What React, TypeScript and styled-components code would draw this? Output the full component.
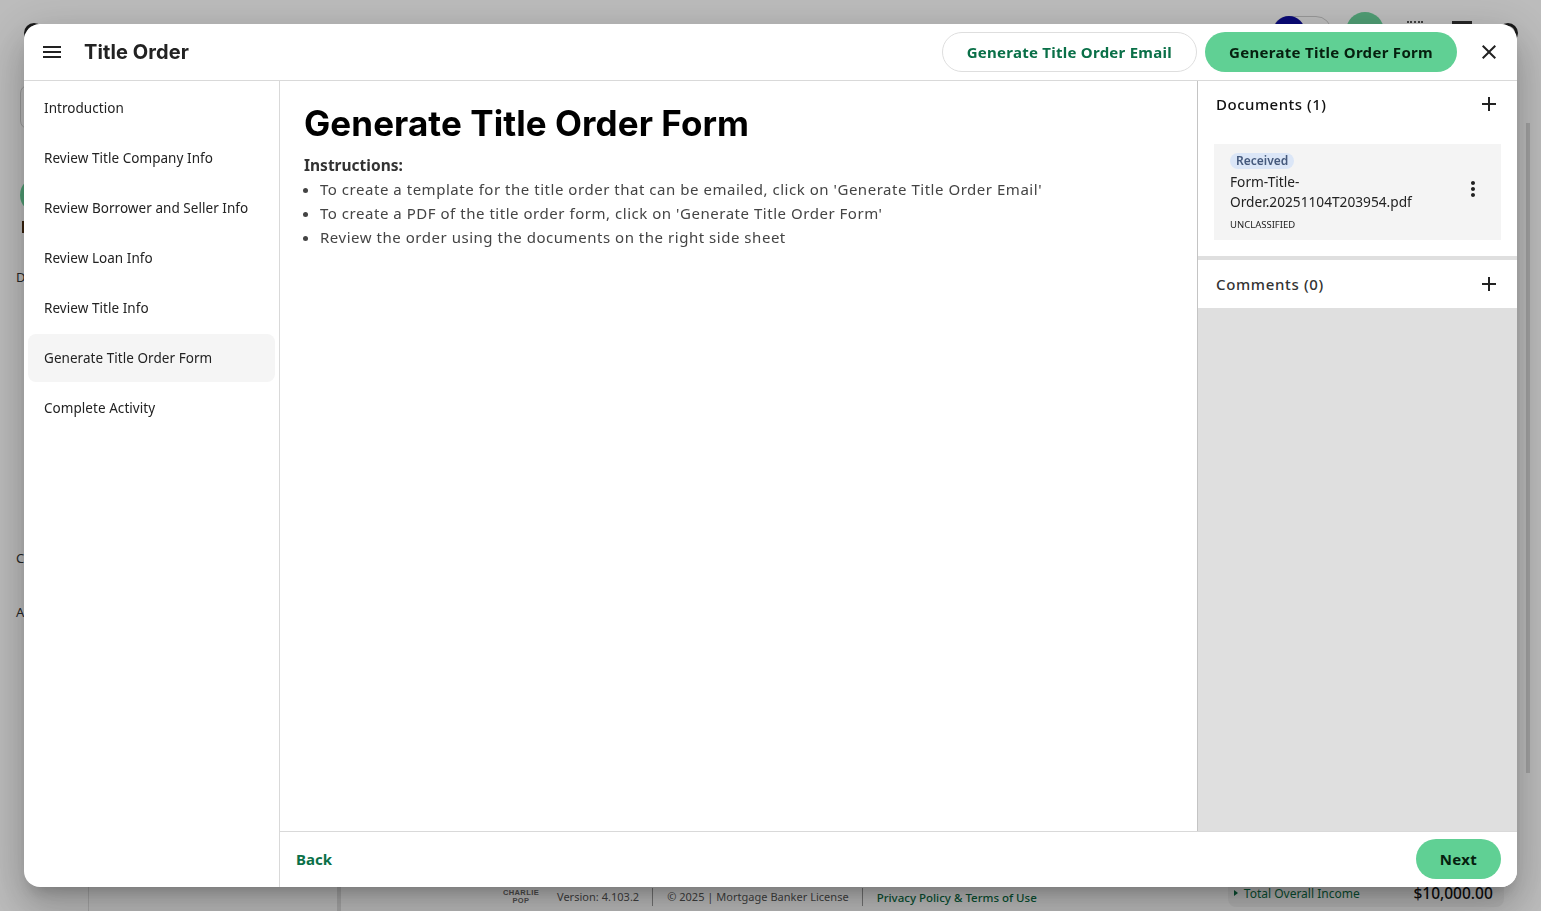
import React from "react";
import styled, { createGlobalStyle } from "styled-components";

const Global = createGlobalStyle`
  html, body { margin: 0; height: 100%; overflow: hidden; background: #f8f8f8; }
  body { font-family: "Noto Sans", "Liberation Sans", sans-serif; }
  * { box-sizing: border-box; }
`;

const Page = styled.div`
  width: 1541px;
  height: 911px;
  display: grid;
  grid-template-rows: 65px 1fr;
  background: #fbfbfb;
  color: #222;
`;
const TopBar = styled.div`
  display: flex;
  justify-content: flex-end;
  align-items: flex-start;
  padding: 12px 23px 0 24px;
`;
const CornerArc = styled.div`
  width: 20px;
  height: 20px;
  margin: 11px 0 0 0;
  border-radius: 50%;
  border: 3px solid #222;
`;
const LeftArc = styled(CornerArc)`
  margin-right: auto;
`;
const Toggle = styled.div`
  width: 60px;
  height: 32px;
  margin: 4px 14px 0 0;
  border: 1px solid #ccc;
  border-radius: 16px;
  display: flex;
`;
const ToggleKnob = styled.span`
  width: 32px;
  height: 32px;
  border-radius: 50%;
  background: #0d0d9e;
  margin-top: -1px;
`;
const AvatarDot = styled.div`
  width: 38px;
  height: 38px;
  border-radius: 50%;
  background: #6ad19a;
  margin-right: 23px;
`;
const CalendarIcon = styled.div`
  width: 16px;
  height: 18px;
  margin: 9px 29px 0 0;
  border-top: 2px dotted #555;
`;
const BoxIcon = styled.div`
  width: 20px;
  height: 18px;
  margin: 9px 26px 0 0;
  border-top: 3px solid #333;
`;
const Middle = styled.div`
  display: grid;
  grid-template-columns: 89px 252px 1fr 24px;
  min-height: 0;
`;
const Rail = styled.div`
  border-right: 1px solid #ddd;
  padding: 20px 0 0 16px;
  display: flex;
  flex-direction: column;
  align-items: flex-start;
  font-size: 13px;
  color: #333;
`;
const RailBox = styled.div`
  width: 40px;
  height: 44px;
  flex: none;
  border: 1px solid #ccc;
  border-radius: 8px;
  margin-left: 4px;
`;
const RailDot = styled.div`
  width: 36px;
  height: 36px;
  flex: none;
  margin: 48px 0 0 4px;
  border-radius: 50%;
  background: #6ad19a;
`;
const RailMark = styled.div`
  width: 2px;
  height: 12px;
  flex: none;
  margin: 8px 0 0 6px;
  background: #4a2c10;
`;
const RailLetter = styled.div<{ $top: number }>`
  margin-top: ${(p) => p.$top}px;
`;
const SideColumn = styled.div`
  border-right: 4px solid #ddd;
`;
const Content = styled.div`
  padding-top: 55px;
  display: flex;
  flex-direction: column;
`;
const ContentRule = styled.div`
  border-top: 1px solid #ddd;
  margin-bottom: auto;
`;
const Scroll = styled.div`
  padding: 58px 0 138px 9px;
  display: flex;
`;
const ScrollThumb = styled.div`
  width: 4px;
  background: #d6d6d6;
`;
const Foot = styled.div`
  display: flex;
  align-items: center;
  height: 32px;
  padding: 4px 0 0 158px;
  font-size: 11px;
  color: #555;
`;
const FootLogo = styled.div`
  width: 44px;
  margin-right: 14px;
  font: 700 7.5px/8px "Liberation Sans", sans-serif;
  letter-spacing: 0.4px;
  color: #666;
  text-align: center;
`;
const FootText = styled.span`
  padding-right: 13px;
  margin-right: 14px;
  border-right: 1px solid #999;
  line-height: 18px;
  letter-spacing: 0.02px;
`;
const FootLink = styled.span`
  font-size: 11.5px;
  color: #0a6b42;
  font-weight: 500;
`;
const Income = styled.div`
  margin: -4px 0 0 191px;
  align-self: flex-start;
  width: 276px;
  height: 28px;
  padding: 0 11px 0 6px;
  border-radius: 8px;
  background: #f0f0f0;
  display: flex;
  justify-content: space-between;
  align-items: center;
  font-size: 12px;
  color: #0a6b42;
`;
const IncomeLabel = styled.span`
  display: flex;
  align-items: center;
  gap: 6px;
`;
const IncomeCaret = styled.i`
  width: 0;
  height: 0;
  border-left: 4px solid #0a6b42;
  border-top: 3px solid transparent;
  border-bottom: 3px solid transparent;
`;
const IncomeValue = styled.span`
  font-size: 15.5px;
  font-weight: 500;
  color: #111;
`;
const Overlay = styled.div`
  position: fixed;
  inset: 0;
  background: rgba(0, 0, 0, 0.25);
`;

const Modal = styled.div`
  position: fixed;
  left: 24px;
  top: 24px;
  width: 1493px;
  height: 863px;
  background: #fff;
  border-radius: 16px;
  overflow: hidden;
  display: grid;
  grid-template-rows: 57px 1fr;
  box-shadow: 0 11px 15px -7px rgba(0, 0, 0, 0.2), 0 24px 38px 3px rgba(0, 0, 0, 0.14), 0 9px 46px 8px rgba(0, 0, 0, 0.12);
`;
const Header = styled.header`
  display: flex;
  align-items: center;
  padding: 0 16px 0 16px;
  border-bottom: 1px solid #d9d9d9;
  height: 57px;
`;
const Title = styled.h2`
  margin: 0 auto 0 20px;
  font: 700 20px/28px Inter, "Liberation Sans", sans-serif;
  color: #222;
  letter-spacing: 0.1px;
`;
const Pill = styled.button<{ $primary?: boolean }>`
  height: 40px;
  border-radius: 20px;
  padding: 0 24px;
  font: 700 15px/20px "Noto Sans", sans-serif;
  letter-spacing: ${(p) => (p.$primary ? "0.3px" : "0.26px")};
  white-space: nowrap;
  cursor: pointer;
  border: ${(p) => (p.$primary ? "none" : "1px solid #dedede")};
  background: ${(p) => (p.$primary ? "#60d094" : "#fff")};
  color: ${(p) => (p.$primary ? "#06200f" : "#0a7048")};
`;
const HeaderActions = styled.div`
  display: flex;
  align-items: center;
  gap: 8px;
`;
const IconBtn = styled.button`
  width: 24px;
  height: 24px;
  padding: 0;
  border: 0;
  background: transparent;
  display: block;
  cursor: pointer;
  color: #222;
`;
const CloseBtn = styled(IconBtn)`
  margin-left: 20px;
`;
const Body = styled.div`
  display: grid;
  grid-template-columns: 256px 1fr;
  min-height: 0;
`;
const Nav = styled.nav`
  border-right: 1px solid #d9d9d9;
  padding: 3px 4px 0 4px;
  display: flex;
  flex-direction: column;
  gap: 2px;
`;
const NavItem = styled.a<{ $active?: boolean }>`
  height: 48px;
  padding: 0 0 0 16px;
  display: flex;
  align-items: center;
  border-radius: 8px;
  font-size: 13.5px;
  letter-spacing: 0.05px;
  line-height: 20px;
  color: #222;
  background: ${(p) => (p.$active ? "#f5f5f5" : "transparent")};
`;
const NavLabel = styled.span`
  margin-top: -1px;
`;
const Main = styled.div`
  display: grid;
  grid-template-rows: 1fr 56px;
  min-height: 0;
`;
const Columns = styled.div`
  display: grid;
  grid-template-columns: 1fr 320px;
  min-height: 0;
`;
const Center = styled.section`
  padding: 18px 24px;
`;
const Heading = styled.h1`
  margin: 0 0 6px;
  font: 700 35px/48px Inter, "Liberation Sans", sans-serif;
  letter-spacing: 0.08px;
  color: #000;
`;
const InstrTitle = styled.div`
  font-size: 15.5px;
  font-weight: 700;
  line-height: 24px;
  color: #333;
`;
const List = styled.ul`
  margin: 0;
  padding: 0 0 0 16px;
  font-size: 15px;
  line-height: 24px;
  color: #444;
  letter-spacing: 0.53px;
`;
const Side = styled.aside`
  background: #dfdfdf;
  border-left: 1px solid #c4c4c4;
  display: flex;
  flex-direction: column;
`;
const DocsSection = styled.div`
  background: #fff;
  padding-bottom: 16px;
  margin-bottom: 4px;
`;
const SectionHead = styled.div`
  height: 48px;
  background: #fff;
  display: flex;
  align-items: center;
  justify-content: space-between;
  padding: 0 16px 0 18px;
  font-size: 15px;
  font-weight: 500;
  letter-spacing: 0.65px;
  color: #333;
`;
const DocsHead = styled(SectionHead)`
  height: 46px;
  letter-spacing: 0.5px;
  color: #111;
`;
const DocCard = styled.div`
  margin: 17px 16px 0 16px;
  height: 96px;
  background: #f4f4f4;
  padding: 5px 16px 11px;
  display: flex;
  align-items: center;
  justify-content: space-between;
`;
const DocInfo = styled.div`
  width: 200px;
  padding-top: 2px;
`;
const Badge = styled.span`
  display: inline-block;
  height: 16px;
  padding: 0 6px;
  border-radius: 8px;
  background: #dbe6f7;
  color: #45597c;
  font-size: 12px;
  font-weight: 600;
  line-height: 16px;
`;
const DocName = styled.div`
  margin-top: 2px;
  font-size: 13.7px;
  line-height: 20px;
  color: #222;
`;
const DocTag = styled.div`
  margin-top: 6px;
  font-size: 9.5px;
  line-height: 14px;
  color: #222;
`;
const Footer = styled.footer`
  border-top: 1px solid #d9d9d9;
  height: 56px;
  display: flex;
  align-items: center;
  justify-content: space-between;
  padding: 0 16px 1px;
  background: #fff;
`;
const BackLink = styled.a`
  font-size: 15px;
  font-weight: 700;
  color: #0a7048;
`;

const Icon = ({ d }: { d: string }) => (
  <svg width="24" height="24" viewBox="0 0 24 24" fill="currentColor" style={{ display: "block" }}>
    <path d={d} />
  </svg>
);
const MENU = "M3 18h18v-2H3zm0-5h18v-2H3zm0-7v2h18V6z";
const CLOSE = "M19 6.41 17.59 5 12 10.59 6.41 5 5 6.41 10.59 12 5 17.59 6.41 19 12 13.41 17.59 19 19 17.59 13.41 12z";
const ADD = "M19 13h-6v6h-2v-6H5v-2h6V5h2v6h6z";
const MORE = "M12 8c1.1 0 2-.9 2-2s-.9-2-2-2-2 .9-2 2 .9 2 2 2m0 2c-1.1 0-2 .9-2 2s.9 2 2 2 2-.9 2-2-.9-2-2-2m0 6c-1.1 0-2 .9-2 2s.9 2 2 2 2-.9 2-2-.9-2-2-2";

const steps = [
  "Introduction",
  "Review Title Company Info",
  "Review Borrower and Seller Info",
  "Review Loan Info",
  "Review Title Info",
  "Generate Title Order Form",
  "Complete Activity",
];

export default function App() {
  return (
    <>
      <Global />
      <Page>
        <TopBar>
          <LeftArc />
          <Toggle><ToggleKnob /></Toggle>
          <AvatarDot />
          <CalendarIcon />
          <BoxIcon />
          <CornerArc />
        </TopBar>
        <Middle>
          <Rail>
            <RailBox />
            <RailDot />
            <RailMark />
            <RailLetter $top={35}>D</RailLetter>
            <RailLetter $top={263}>C</RailLetter>
            <RailLetter $top={36}>A</RailLetter>
          </Rail>
          <SideColumn />
          <Content>
            <ContentRule />
            <Foot>
              <FootLogo>CHARLIE<br />POP</FootLogo>
              <FootText>Version: 4.103.2</FootText>
              <FootText>© 2025 | Mortgage Banker License</FootText>
              <FootLink>Privacy Policy &amp; Terms of Use</FootLink>
              <Income>
                <IncomeLabel><IncomeCaret />Total Overall Income</IncomeLabel>
                <IncomeValue>$10,000.00</IncomeValue>
              </Income>
            </Foot>
          </Content>
          <Scroll><ScrollThumb /></Scroll>
        </Middle>
      </Page>
      <Overlay />
      <Modal>
        <Header>
          <IconBtn aria-label="menu"><Icon d={MENU} /></IconBtn>
          <Title>Title Order</Title>
          <HeaderActions>
            <Pill>Generate Title Order Email</Pill>
            <Pill $primary>Generate Title Order Form</Pill>
          </HeaderActions>
          <CloseBtn aria-label="close"><Icon d={CLOSE} /></CloseBtn>
        </Header>
        <Body>
          <Nav>
            {steps.map((s, i) => (
              <NavItem key={s} $active={i === 5}><NavLabel>{s}</NavLabel></NavItem>
            ))}
          </Nav>
          <Main>
            <Columns>
              <Center>
                <Heading>Generate Title Order Form</Heading>
                <InstrTitle>Instructions:</InstrTitle>
                <List>
                  <li>To create a template for the title order that can be emailed, click on 'Generate Title Order Email'</li>
                  <li>To create a PDF of the title order form, click on 'Generate Title Order Form'</li>
                  <li>Review the order using the documents on the right side sheet</li>
                </List>
              </Center>
              <Side>
                <DocsSection>
                  <DocsHead>
                    <span>Documents (1)</span>
                    <IconBtn aria-label="add document"><Icon d={ADD} /></IconBtn>
                  </DocsHead>
                  <DocCard>
                    <DocInfo>
                      <Badge>Received</Badge>
                      <DocName>Form-Title-Order.20251104T203954.pdf</DocName>
                      <DocTag>UNCLASSIFIED</DocTag>
                    </DocInfo>
                    <IconBtn aria-label="more"><Icon d={MORE} /></IconBtn>
                  </DocCard>
                </DocsSection>
                <SectionHead>
                  <span>Comments (0)</span>
                  <IconBtn aria-label="add comment"><Icon d={ADD} /></IconBtn>
                </SectionHead>
              </Side>
            </Columns>
            <Footer>
              <BackLink>Back</BackLink>
              <Pill $primary>Next</Pill>
            </Footer>
          </Main>
        </Body>
      </Modal>
    </>
  );
}
